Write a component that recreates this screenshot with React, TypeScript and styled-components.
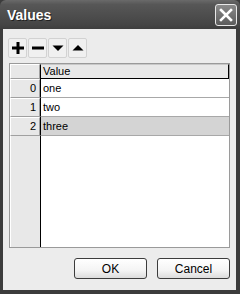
import React from 'react';
import styled, { createGlobalStyle } from 'styled-components';

const GlobalStyle = createGlobalStyle`
  html, body {
    margin: 0;
    padding: 0;
    background: #ffffff;
  }
  body {
    font-family: 'Liberation Sans', Arial, sans-serif;
  }
`;

const rows = ['one', 'two', 'three'];
const SELECTED_ROW = 2;

const App = () => {
  return (
    <>
      <GlobalStyle />
      <Window>
        <TitleBar>
          <Title>Values</Title>
          <CloseButton aria-label="Close">
            <svg width="14" height="14" viewBox="0 0 14 14">
              <path d="M2 2 L12 12 M12 2 L2 12" stroke="#ffffff" strokeWidth="2.6" strokeLinecap="square" />
            </svg>
          </CloseButton>
        </TitleBar>
        <Client>
          <Toolbar>
            <ToolButton aria-label="Add">
              <svg width="12" height="12" viewBox="0 0 12 12">
                <path d="M4.5 0h3v4.5H12v3H7.5V12h-3V7.5H0v-3h4.5z" fill="#000" />
              </svg>
            </ToolButton>
            <ToolButton aria-label="Remove">
              <svg width="12" height="12" viewBox="0 0 12 12">
                <rect x="0" y="4.5" width="12" height="3" fill="#000" />
              </svg>
            </ToolButton>
            <ToolButton aria-label="Move down">
              <svg width="12" height="12" viewBox="0 0 12 12">
                <path d="M0.5 3.5h11L6 9z" fill="#000" />
              </svg>
            </ToolButton>
            <ToolButton aria-label="Move up">
              <svg width="12" height="12" viewBox="0 0 12 12">
                <path d="M0.5 8.5h11L6 3z" fill="#000" />
              </svg>
            </ToolButton>
          </Toolbar>
          <Grid>
            <HeaderRow>
              <CornerCell />
              <ColumnHeader>Value</ColumnHeader>
            </HeaderRow>
            {rows.map((value, index) => (
              <Row key={value} selected={index === SELECTED_ROW}>
                <RowHeader>{index}</RowHeader>
                <Cell>{value}</Cell>
              </Row>
            ))}
            <Filler>
              <FillerHeader />
              <FillerBody />
            </Filler>
          </Grid>
          <Footer>
            <DialogButton>OK</DialogButton>
            <DialogButton>Cancel</DialogButton>
          </Footer>
        </Client>
      </Window>
    </>
  );
};

const Window = styled.div`
  width: 240px;
  height: 294px;
  display: flex;
  flex-direction: column;
  background: #3c3c3c;
  box-sizing: border-box;
`;

const TitleBar = styled.div`
  height: 29px;
  flex: none;
  display: flex;
  align-items: center;
  justify-content: space-between;
  padding: 0 3px 0 7px;
  background: linear-gradient(to bottom, #6a6a6a 0%, #575757 15%, #4e4e4e 50%, #454545 85%, #3e3e3e 100%);
  border-radius: 6px 6px 0 0;
`;

const Title = styled.span`
  color: #ffffff;
  font-family: 'Liberation Sans', Arial, sans-serif;
  font-weight: 700;
  font-size: 14px;
  text-shadow: 1px 1px 0 #222;
`;

const CloseButton = styled.div`
  width: 22px;
  height: 22px;
  box-sizing: border-box;
  border: 1px solid #e8e8e8;
  border-radius: 3px;
  background: linear-gradient(to bottom, #8a8a8a, #5c5c5c);
  display: flex;
  align-items: center;
  justify-content: center;
`;

const Client = styled.div`
  flex: 1;
  margin: 0 4px 4px 3px;
  background: #ececec;
  display: flex;
  flex-direction: column;
  padding: 9px 6px 11px 5px;
  min-height: 0;
`;

const Toolbar = styled.div`
  display: flex;
  gap: 1px;
  margin-bottom: 5px;
`;

const ToolButton = styled.div`
  width: 19px;
  height: 20px;
  box-sizing: border-box;
  border: 1px solid #d2d2d2;
  border-radius: 2px;
  background: #f0f0f0;
  display: flex;
  align-items: center;
  justify-content: center;
`;

const Grid = styled.div`
  flex: 1;
  margin-left: 1px;
  display: flex;
  flex-direction: column;
  border: 1px solid #9a9a9a;
  background: #ffffff;
  font-size: 11px;
  color: #000;
`;

const HeaderRow = styled.div`
  display: flex;
  height: 15px;
`;

const CornerCell = styled.div`
  width: 30px;
  box-sizing: border-box;
  background: #e8e8e8;
  border-top: 1px solid #ffffff;
  border-left: 1px solid #ffffff;
  border-right: 1px solid #a0a0a0;
  border-bottom: 1px solid #a0a0a0;
`;

const ColumnHeader = styled.div`
  flex: 1;
  box-sizing: border-box;
  background: #e8e8e8;
  border: 1px solid #000;
  border-top-color: #c8c8c8;
  padding-left: 2px;
  line-height: 13px;
`;

const Row = styled.div<{ selected?: boolean }>`
  display: flex;
  height: 19px;
  background: ${({ selected }) => (selected ? '#d4d4d4' : '#ffffff')};
`;

const RowHeader = styled.div`
  width: 30px;
  box-sizing: border-box;
  background: #e8e8e8;
  border-top: 1px solid #ffffff;
  border-left: 1px solid #ffffff;
  border-right: 1px solid #a0a0a0;
  border-bottom: 1px solid #a0a0a0;
  text-align: right;
  padding-right: 3px;
  line-height: 17px;
`;

const Cell = styled.div`
  flex: 1;
  box-sizing: border-box;
  border-left: 1px solid #000;
  border-bottom: 1px solid #a8a8a8;
  padding-left: 2px;
  line-height: 18px;
`;

const Filler = styled.div`
  flex: 1;
  display: flex;
`;

const FillerHeader = styled.div`
  width: 30px;
  box-sizing: border-box;
  background: #e8e8e8;
  border-left: 1px solid #ffffff;
`;

const FillerBody = styled.div`
  flex: 1;
  border-left: 1px solid #000;
`;

const Footer = styled.div`
  display: flex;
  justify-content: flex-end;
  gap: 10px;
  margin-top: 10px;
`;

const DialogButton = styled.div`
  width: 73px;
  height: 21px;
  box-sizing: border-box;
  border: 1px solid #3c3c3c;
  border-radius: 3px;
  background: linear-gradient(to bottom, #ffffff 0%, #f4f4f4 60%, #dcdcdc 100%);
  display: flex;
  align-items: center;
  justify-content: center;
  font-size: 12px;
  color: #000;
`;

export default App;
